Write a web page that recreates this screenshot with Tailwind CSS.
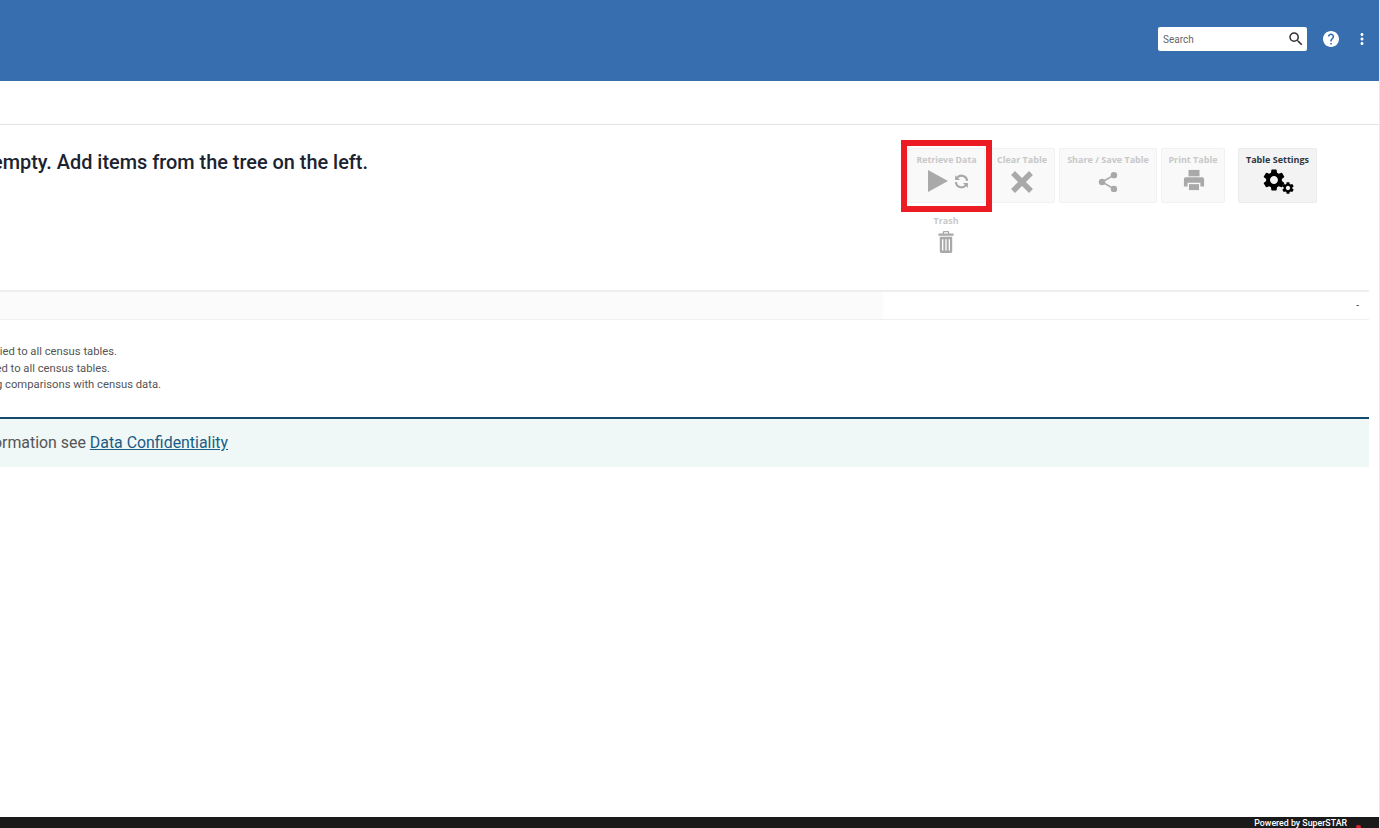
<!DOCTYPE html>
<html lang="en">
<head>
    <meta charset="UTF-8">
    <meta name="viewport" content="width=device-width, initial-scale=1.0">
    <title>Table View</title>
    <script src="https://cdn.jsdelivr.net/npm/@tailwindcss/browser@4"></script>
</head>
<body class="bg-white h-screen overflow-hidden font-['Roboto',sans-serif]">
<div class="w-[1380px] h-[828px] flex flex-col border-r border-[#e8e8e8]">

    <!-- header -->
    <header class="h-[81px] shrink-0 bg-[#366eb0] flex items-center justify-end pb-[3px]">
        <div class="w-[149px] h-[24px] bg-white rounded-[2px] flex items-center justify-between pl-[5px] pr-[2px]">
            <span class="text-[10px] text-[#666]">Search</span>
            <svg class="w-[18px] h-[18px]" viewBox="0 0 24 24" fill="#333"><path d="M15.5 14h-.79l-.28-.27A6.47 6.47 0 0 0 16 9.5 6.5 6.5 0 1 0 9.5 16c1.61 0 3.09-.59 4.23-1.57l.27.28v.79l5 4.99L20.49 19l-4.99-5zm-6 0C7.01 14 5 11.99 5 9.5S7.01 5 9.5 5 14 7.01 14 9.5 11.99 14 9.5 14z"/></svg>
        </div>
        <svg class="w-[16px] h-[16px] ml-[16px]" viewBox="2 2 20 20" fill="#fff"><path d="M12 2C6.48 2 2 6.48 2 12s4.48 10 10 10 10-4.48 10-10S17.52 2 12 2zm1 17h-2v-2h2v2zm2.07-7.75l-.9.92C13.45 12.9 13 13.5 13 15h-2v-.5c0-1.1.45-2.1 1.17-2.83l1.24-1.26c.37-.36.59-.86.59-1.41 0-1.1-.9-2-2-2s-2 .9-2 2H8c0-2.21 1.79-4 4-4s4 1.79 4 4c0 .88-.36 1.68-.93 2.25z"/></svg>
        <svg class="w-[18px] h-[18px] ml-[14px] mr-[8px]" viewBox="0 0 24 24" fill="#fff"><path d="M12 8c1.1 0 2-.9 2-2s-.9-2-2-2-2 .9-2 2 .9 2 2 2zm0 2c-1.1 0-2 .9-2 2s.9 2 2 2 2-.9 2-2-.9-2-2-2zm0 6c-1.1 0-2 .9-2 2s.9 2 2 2 2-.9 2-2-.9-2-2-2z"/></svg>
    </header>

    <div class="h-[44px] shrink-0 border-b border-[#e2e2e2]"></div>

    <main class="flex-1 pr-[10px] flex flex-col">
        <!-- message + toolbar -->
        <div class="h-[165px] flex">
            <div class="w-[907px] shrink-0">
                <div class="w-[368px] mt-[26px] flex justify-end overflow-hidden">
                    <h2 class="shrink-0 whitespace-nowrap text-[19.900px] leading-[24px] font-medium text-[#1c2330]">The table is empty. Add items from the tree on the left.</h2>
                </div>
            </div>

            <div class="relative flex-1 pt-[23px]">
                <div class="flex items-start">
                    <button class="w-[78px] h-[55px] bg-[#f9f9f9] border border-[#f1f1f1] rounded-[2px] flex flex-col items-center">
                        <span class="mt-[5px] ml-[1px] text-[8.800px] leading-[12px] font-bold font-['Open_Sans',sans-serif] text-[#c8c8c8] whitespace-nowrap">Retrieve Data</span>
                        <span class="flex items-center mt-[4px] ml-[5px]">
                            <svg class="w-[20px] h-[22px]" viewBox="0 0 20 22" fill="#a9a9a9"><path d="M0 0L20 11L0 22z"/></svg>
                            <svg class="w-[17px] h-[17px] ml-[5px]" viewBox="0 0 24 24" fill="none" stroke="#a9a9a9" stroke-width="3"><path d="M20 11a8 8 0 0 0-14-4.5L4 9"/><path d="M4 13a8 8 0 0 0 14 4.5L20 15"/><path d="M3 3v7h7" stroke="none" fill="#a9a9a9"/><path d="M21 21v-7h-7" stroke="none" fill="#a9a9a9"/></svg>
                        </span>
                    </button>
                    <button class="w-[64px] h-[55px] ml-[6px] bg-[#f9f9f9] border border-[#f1f1f1] rounded-[2px] flex flex-col items-center">
                        <span class="mt-[5px] mr-[2px] text-[9px] leading-[12px] font-bold font-['Open_Sans',sans-serif] text-[#c8c8c8] whitespace-nowrap">Clear Table</span>
                        <svg class="w-[24px] h-[24px] mt-[4px] mr-[2px]" viewBox="0 0 24 24" fill="none" stroke="#a9a9a9" stroke-width="5.500"><path d="M3 3l18 18M21 3L3 21"/></svg>
                    </button>
                    <button class="w-[98px] h-[55px] ml-[4px] bg-[#f9f9f9] border border-[#f1f1f1] rounded-[2px] flex flex-col items-center">
                        <span class="mt-[5px] text-[9px] leading-[12px] font-bold font-['Open_Sans',sans-serif] text-[#c8c8c8] whitespace-nowrap">Share / Save Table</span>
                        <svg class="w-[22px] h-[22px] mt-[5px]" viewBox="0 0 24 24" fill="#a9a9a9"><circle cx="18.500" cy="4.500" r="3.500"/><circle cx="5.500" cy="12" r="3.500"/><circle cx="18.500" cy="19.500" r="3.500"/><path d="M18.500 4.500L5.500 12l13 7.500" fill="none" stroke="#a9a9a9" stroke-width="1.800"/></svg>
                    </button>
                    <button class="w-[64px] h-[55px] ml-[4px] bg-[#f9f9f9] border border-[#f1f1f1] rounded-[2px] flex flex-col items-center">
                        <span class="mt-[5px] text-[9px] leading-[12px] font-bold font-['Open_Sans',sans-serif] text-[#c8c8c8] whitespace-nowrap">Print Table</span>
                        <svg class="w-[22px] h-[22px] mt-[3px] ml-[2px]" viewBox="0 0 24 24" fill="#a9a9a9"><path d="M6 1h12v7H6z"/><path d="M3 9h18a2 2 0 0 1 2 2v8h-4v-4H5v4H1v-8a2 2 0 0 1 2-2z"/><path d="M6.500 16.500h11V23h-11z"/></svg>
                    </button>
                    <button class="w-[79px] h-[55px] ml-[13px] bg-[#f3f3f3] border border-[#ececec] rounded-[2px] flex flex-col items-center">
                        <span class="mt-[5px] text-[9px] leading-[12px] font-bold font-['Open_Sans',sans-serif] text-[#2f3640] whitespace-nowrap">Table Settings</span>
                        <svg class="w-[32px] h-[25px] mt-[3px]" viewBox="0 0 32 25" fill="#000">
                            <svg x="1" y="0" width="22" height="22" viewBox="2 2 20 20"><path d="M19.140 12.940c.04-.3.06-.61.06-.94 0-.32-.02-.64-.07-.94l2.030-1.580c.18-.14.23-.41.12-.61l-1.920-3.320c-.12-.22-.37-.29-.59-.22l-2.390.96c-.5-.38-1.030-.7-1.620-.94l-.36-2.540c-.04-.24-.24-.41-.48-.41h-3.840c-.24 0-.43.17-.47.41l-.36 2.540c-.59.24-1.130.57-1.620.94l-2.390-.96c-.22-.08-.47 0-.59.22L2.740 8.870c-.12.21-.08.47.12.61l2.030 1.580c-.05.3-.09.63-.09.94s.02.64.07.94l-2.030 1.580c-.18.14-.23.41-.12.61l1.920 3.320c.12.22.37.29.59.22l2.390-.96c.5.38 1.030.7 1.620.94l.36 2.540c.05.24.24.41.48.41h3.840c.24 0 .44-.17.47-.41l.36-2.540c.59-.24 1.130-.56 1.620-.94l2.390.96c.22.08.47 0 .59-.22l1.920-3.320c.12-.22.07-.47-.12-.61l-2.010-1.580zM12 15.600c-1.980 0-3.600-1.620-3.600-3.600s1.620-3.600 3.600-3.600 3.600 1.620 3.600 3.600-1.620 3.600-3.600 3.600z"/></svg>
                            <svg x="20" y="13" width="12" height="12" viewBox="2 2 20 20"><path d="M19.140 12.940c.04-.3.06-.61.06-.94 0-.32-.02-.64-.07-.94l2.030-1.580c.18-.14.23-.41.12-.61l-1.920-3.320c-.12-.22-.37-.29-.59-.22l-2.390.96c-.5-.38-1.030-.7-1.620-.94l-.36-2.540c-.04-.24-.24-.41-.48-.41h-3.840c-.24 0-.43.17-.47.41l-.36 2.540c-.59.24-1.130.57-1.620.94l-2.390-.96c-.22-.08-.47 0-.59.22L2.740 8.870c-.12.21-.08.47.12.61l2.030 1.580c-.05.3-.09.63-.09.94s.02.64.07.94l-2.030 1.580c-.18.14-.23.41-.12.61l1.920 3.320c.12.22.37.29.59.22l2.390-.96c.5.38 1.030.7 1.620.94l.36 2.540c.05.24.24.41.48.41h3.840c.24 0 .44-.17.47-.41l.36-2.540c.59-.24 1.130-.56 1.620-.94l2.390.96c.22.08.47 0 .59-.22l1.920-3.320c.12-.22.07-.47-.12-.61l-2.010-1.580zM12 15.600c-1.980 0-3.600-1.620-3.600-3.600s1.620-3.600 3.600-3.600 3.600 1.620 3.600 3.600-1.620 3.600-3.600 3.600z"/></svg>
                        </svg>
                    </button>
                </div>
                <div class="w-[78px] mt-[12px] flex flex-col items-center">
                    <span class="text-[9px] leading-[12px] font-bold font-['Open_Sans',sans-serif] text-[#c8c8c8]">Trash</span>
                    <svg class="w-[16px] h-[22px] mt-[4px]" viewBox="0 0 18 23" preserveAspectRatio="none" fill="#a9a9a9"><path d="M6 0h6l1 2.500h4.500v2.500H.5V2.500H5zM7 1.200l-.4 1.300h4.800L11 1.200z" fill-rule="evenodd"/><path d="M2 6h14v15.500a1.500 1.500 0 0 1-1.500 1.500h-11A1.500 1.500 0 0 1 2 21.500zM4.500 8.500v12H6v-12zM8.250 8.500v12h1.500v-12zM12 8.500v12h1.500v-12z" fill-rule="evenodd"/></svg>
                </div>
                <!-- highlight drawn over the first button -->
                <div class="absolute left-[-6px] top-[15px] w-[91px] h-[72px] border-[6px] border-[#ed1c24] pointer-events-none"></div>
            </div>
        </div>

        <!-- summary row -->
        <div class="h-[30px] flex border-t-2 border-[#eeeeee] border-b border-b-[#f0f0f0]">
            <div class="w-[883px] bg-[#fbfbfb]"></div>
            <div class="flex-1 flex items-center justify-end pr-[10px] text-[10px] text-[#333]">-</div>
        </div>

        <!-- notes -->
        <div class="h-[97px] pt-[24px] text-[11.250px] leading-[16.500px] text-[#555]">
            <div class="w-[117px] flex justify-end overflow-hidden"><p class="shrink-0 whitespace-nowrap">Small random adjustment applied to all census tables.</p></div>
            <div class="w-[110px] flex justify-end overflow-hidden"><p class="shrink-0 whitespace-nowrap">Rounding has been applied to all census tables.</p></div>
            <div class="w-[161px] flex justify-end overflow-hidden"><p class="shrink-0 whitespace-nowrap">Care should be taken making comparisons with census data.</p></div>
        </div>

        <!-- confidentiality banner -->
        <div class="h-[50px] border-t-2 border-[#134a6e] bg-[#eff7f7] flex items-center text-[15.900px] text-[#555]">
            <div class="w-[228px] flex justify-end overflow-hidden">
                <p class="shrink-0 whitespace-nowrap">For more information see <a href="#" class="text-[#1c5c85] underline">Data Confidentiality</a></p>
            </div>
        </div>
        <div class="flex-1"></div>
    </main>

    <!-- footer -->
    <footer class="h-[11px] shrink-0 bg-[#1a1a1a] flex items-center justify-end overflow-hidden">
        <span class="mt-[1px] text-[8.800px] leading-[11px] font-medium text-white whitespace-nowrap">Powered by SuperSTAR</span>
        <span class="w-[5px] h-[4px] bg-[#d9232e] rounded-full ml-[9px] mr-[18px] mt-[8px]"></span>
    </footer>
</div>
</body>
</html>
